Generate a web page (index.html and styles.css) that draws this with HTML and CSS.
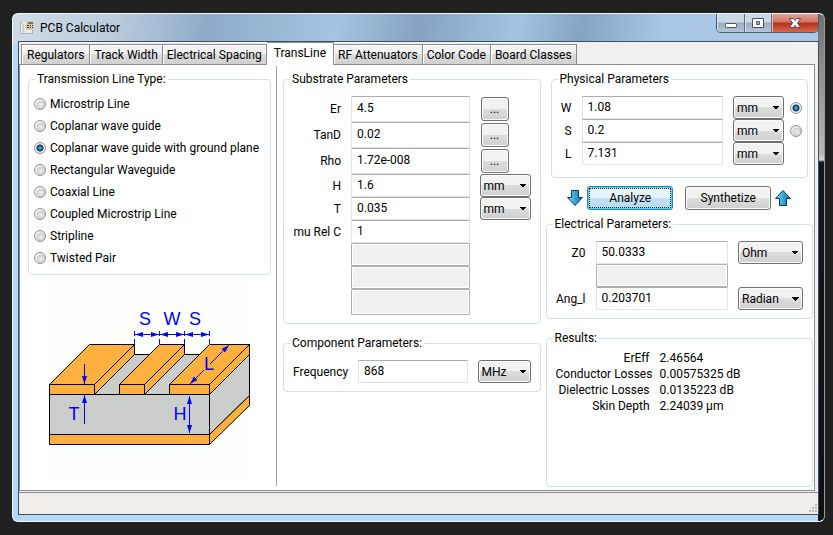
FILE: index.html
```
<!DOCTYPE html>
<html lang="en">
<head>
<meta charset="utf-8">
<title>PCB Calculator</title>
<link rel="stylesheet" href="styles.css">
</head>
<body>
<div class="window">
  <header class="titlebar">
    <svg class="app-icon" width="16" height="16" viewBox="0 0 16 16" aria-hidden="true">
      <path d="M0 2h12v12H0z" fill="#ececea"/>
      <path d="M.5 2v12M1.500 2l2 4-1 4 2 2-2 2M0 13.500h12M12.500 9v5" fill="none" stroke="#b3b6ba"/>
      <path d="M6 1h8v9H6z" fill="#d3cdb4"/>
      <path d="M8 2h5v2H8z" fill="#6d7a3c"/>
      <path d="M7 5h2v1H7zM10 5h1v1h-1zM12 5h1v1h-1zM7 7h2v1H7zM10 7h1v1h-1zM12 7h1v1h-1z" fill="#333"/>
    </svg>
    <h1 class="title">PCB Calculator</h1>
    <div class="controls">
      <button class="control minimize" type="button" aria-label="Minimize">
        <svg width="14" height="12" viewBox="0 0 14 12"><rect x="1.500" y="6.500" width="11" height="4" rx="1" fill="#fff" stroke="#4b5468"/></svg>
      </button>
      <button class="control maximize" type="button" aria-label="Maximize">
        <svg width="12" height="12" viewBox="0 0 12 12"><path fill-rule="evenodd" d="M.5 1.500h11v9H.5zM4.500 4.500v3h3v-3z" fill="#fff" stroke="#4b5468"/></svg>
      </button>
      <button class="control close" type="button" aria-label="Close">
        <svg width="14" height="12" viewBox="0 0 14 12"><path d="M1.500 1.500h4L7 3.500l1.500-2h4L9.500 6l3 4.500h-4L7 8.500l-1.500 2h-4l3-4.500z" fill="#fff" stroke="#4f4a5c"/></svg>
      </button>
    </div>
  </header>
  <div class="client">
    <nav class="tabs">
      <button class="tab" type="button">Regulators</button>
      <button class="tab" type="button">Track Width</button>
      <button class="tab" type="button">Electrical Spacing</button>
      <button class="tab active" type="button">TransLine</button>
      <button class="tab" type="button">RF Attenuators</button>
      <button class="tab" type="button">Color Code</button>
      <button class="tab" type="button">Board Classes</button>
    </nav>
    <main class="page">
      <section class="types-column">
        <fieldset class="group types">
          <legend>Transmission Line Type:</legend>
          <label class="choice"><input type="radio" name="type">Microstrip Line</label>
          <label class="choice"><input type="radio" name="type">Coplanar wave guide</label>
          <label class="choice"><input type="radio" name="type" checked>Coplanar wave guide with ground plane</label>
          <label class="choice"><input type="radio" name="type">Rectangular Waveguide</label>
          <label class="choice"><input type="radio" name="type">Coaxial Line</label>
          <label class="choice"><input type="radio" name="type">Coupled Microstrip Line</label>
          <label class="choice"><input type="radio" name="type">Stripline</label>
          <label class="choice"><input type="radio" name="type">Twisted Pair</label>
        </fieldset>
        <svg class="diagram" width="202" height="203" viewBox="48 280 202 203" role="img" aria-label="Coplanar wave guide with ground plane">
          <defs>
            <marker id="tip" viewBox="0 0 8 6" refX="8" refY="3" markerWidth="8" markerHeight="6" markerUnits="userSpaceOnUse" orient="auto-start-reverse"><path d="M0 .5L8 3 0 5.500z" fill="#0000f5"/></marker>
          </defs>
          <path d="M48 280h202v203H48z" fill="#fcfffc"/>
          <g stroke="#000" stroke-linejoin="round">
            <path d="M94.500 394.500l40-40h114.500l-39.500 40z" fill="#cbcdcb"/>
            <path d="M49.500 394.500h160v40h-160z" fill="#cbcdcb"/>
            <path d="M209.500 394.500l40-40v41l-40 39z" fill="#cbcdcb"/>
            <path d="M49.500 434.500h160v10h-160zM209.500 434.500l40-39v10l-40 39z" fill="#ffb03f"/>
            <path d="M49.500 384.500l40-40h45l-40 40zM94.500 384.500l40-40v10l-40 40zM49.500 384.500h45v10h-45z" fill="#ffb03f"/>
            <path d="M119.500 384.500l40-40h25l-40 40zM144.500 384.500l40-40v10l-40 40zM119.500 384.500h25v10h-25z" fill="#ffb03f"/>
            <path d="M169.500 384.500l40-40h40l-40 40zM209.500 384.500l40-40v10l-40 40zM169.500 384.500h40v10h-40z" fill="#ffb03f"/>
          </g>
          <g fill="none" stroke="#0000f5">
            <path d="M134.500 331v13M159.500 331v13M184.500 331v13M209.500 331v13" stroke-dasharray="5 3"/>
            <path d="M135 334.500h24" marker-start="url(#tip)" marker-end="url(#tip)"/>
            <path d="M160 334.500h24" marker-start="url(#tip)" marker-end="url(#tip)"/>
            <path d="M185 334.500h24" marker-start="url(#tip)" marker-end="url(#tip)"/>
            <path d="M189.500 396v37" marker-start="url(#tip)" marker-end="url(#tip)"/>
            <path d="M84.500 364v20" marker-end="url(#tip)"/>
            <path d="M84.500 424v-29" marker-end="url(#tip)"/>
            <path d="M204 370l-14 14" marker-end="url(#tip)"/>
            <path d="M210 364l19-19" marker-end="url(#tip)"/>
          </g>
          <g class="diagram-text">
            <text x="145" y="325">S</text><text x="172" y="325">W</text><text x="195" y="325">S</text>
            <text x="209" y="370">L</text><text x="74" y="420">T</text><text x="180" y="420">H</text>
          </g>
        </svg>
      </section>
      <section class="middle-column">
        <fieldset class="group substrate">
          <legend>Substrate Parameters</legend>
          <div class="row tall"><label for="er">Er</label><input id="er" type="text" value="4.5"><button class="button more" type="button" aria-label="Er values">...</button></div>
          <div class="row tall"><label for="tand">TanD</label><input id="tand" type="text" value="0.02"><button class="button more" type="button" aria-label="TanD values">...</button></div>
          <div class="row tall"><label for="rho">Rho</label><input id="rho" type="text" value="1.72e-008"><button class="button more" type="button" aria-label="Rho values">...</button></div>
          <div class="row"><label for="h">H</label><input id="h" type="text" value="1.6"><select aria-label="H unit"><option>mm</option></select></div>
          <div class="row"><label for="t">T</label><input id="t" type="text" value="0.035"><select aria-label="T unit"><option>mm</option></select></div>
          <div class="row"><label for="mu">mu Rel C</label><input id="mu" type="text" value="1"></div>
          <div class="row"><input class="unlabelled" type="text" disabled aria-label="Unused 1"></div>
          <div class="row"><input class="unlabelled" type="text" disabled aria-label="Unused 2"></div>
          <div class="row tall"><input class="unlabelled" type="text" disabled aria-label="Unused 3"></div>
        </fieldset>
        <fieldset class="group component">
          <legend>Component Parameters:</legend>
          <div class="row"><label for="freq">Frequency</label><input id="freq" type="text" value="868"><select aria-label="Frequency unit"><option>MHz</option></select></div>
        </fieldset>
      </section>
      <section class="right-column">
        <fieldset class="group physical">
          <legend>Physical Parameters</legend>
          <div class="row"><label for="w">W</label><input id="w" type="text" value="1.08"><select aria-label="W unit"><option>mm</option></select><input type="radio" name="solve" aria-label="Solve for W" checked></div>
          <div class="row"><label for="s">S</label><input id="s" type="text" value="0.2"><select aria-label="S unit"><option>mm</option></select><input type="radio" name="solve" aria-label="Solve for S"></div>
          <div class="row"><label for="l">L</label><input id="l" type="text" value="7.131"><select aria-label="L unit"><option>mm</option></select></div>
        </fieldset>
        <div class="actions">
          <svg width="18" height="18" viewBox="0 0 18 18" aria-hidden="true">
            <defs><linearGradient id="shine"><stop offset="0" stop-color="#8fe0f5"/><stop offset=".5" stop-color="#2fa9d6"/><stop offset="1" stop-color="#156d9b"/></linearGradient></defs>
            <path d="M5.500 1.500h7v7h4L9 16.500 1.500 8.500h4z" fill="url(#shine)" stroke="#12344f"/>
          </svg>
          <button class="button focused" type="button">Analyze</button>
          <button class="button" type="button">Synthetize</button>
          <svg width="18" height="18" viewBox="0 0 18 18" aria-hidden="true"><path d="M5.500 16.500h7v-7h4L9 1.500 1.500 9.500h4z" fill="url(#shine)" stroke="#12344f"/></svg>
        </div>
        <fieldset class="group electrical">
          <legend>Electrical Parameters:</legend>
          <div class="row"><label for="z0">Z0</label><input id="z0" type="text" value="50.0333"><select aria-label="Z0 unit"><option>Ohm</option></select></div>
          <div class="row"><input class="unlabelled" type="text" disabled aria-label="Unused 4"></div>
          <div class="row"><label for="ang">Ang_l</label><input id="ang" type="text" value="0.203701"><select aria-label="Ang_l unit"><option>Radian</option></select></div>
        </fieldset>
        <fieldset class="group results">
          <legend>Results:</legend>
          <dl class="result-list">
            <dt>ErEff</dt><dd>2.46564</dd>
            <dt>Conductor Losses</dt><dd>0.00575325 dB</dd>
            <dt>Dielectric Losses</dt><dd>0.0135223 dB</dd>
            <dt>Skin Depth</dt><dd>2.24039 µm</dd>
          </dl>
        </fieldset>
      </section>
    </main>
    <footer class="statusbar">
      <svg width="10" height="10" viewBox="0 0 10 10" aria-hidden="true"><path d="M7 0h2v2H7zM4 3h2v2H4zM7 3h2v2H7zM1 6h2v2H1zM4 6h2v2H4zM7 6h2v2H7z" fill="#bdbab9"/></svg>
    </footer>
  </div>
</div>
</body>
</html>
```
FILE: styles.css
```
* { box-sizing: border-box; }

body {
  margin: 0;
  min-height: 100vh;
  display: flex;
  padding: 13px 8px 13px 12px;
  background: #212121;
  color: #000;
  font: 12px/16px Roboto, "Open Sans", sans-serif;
}

button, input, select { font: inherit; color: inherit; margin: 0; }

.window {
  flex: 1;
  display: flex;
  flex-direction: column;
  padding: 0 5px;
  border: 1px solid #f2f8fd;
  border-right-color: #9a9a9a;
  border-radius: 6px;
  background:
    linear-gradient(to bottom, #6f7173 0, #b8b8b8 140px, #d8d8d8 146px, #11181d 148px, #0d1114 100%) right / 6px 100% no-repeat,
    linear-gradient(100deg, #cfdbe7 0, #bccddd 12%, #8fabc9 24%, #a5c3e0 40%, #86a2c0 50%, #a3c3e2 62%, #86a3c1 70%, #a9c7e5 80%, #aac8e6 100%) top / 100% 30px no-repeat,
    #b4d8fa;
}

.titlebar {
  height: 27px;
  display: flex;
  align-items: center;
}

.app-icon { margin-left: 2px; }

.title {
  margin: 0 0 0 4px;
  flex: 1;
  font-size: 12px;
  font-weight: 400;
}

.controls {
  align-self: flex-start;
  display: flex;
  height: 19px;
  border: 1px solid #4c5a6d;
  border-top: 0;
  border-radius: 0 0 5px 5px;
  overflow: hidden;
}

.control {
  display: flex;
  align-items: center;
  justify-content: center;
  width: 28px;
  padding: 0;
  border: 0;
  border-right: 1px solid #5d6c80;
  background: linear-gradient(#cbd8e6 45%, #98abc0 50%, #b4c7da);
  box-shadow: inset 1px 0 #d9e4ef;
}

.maximize { width: 27px; }

.close {
  width: 46px;
  border-right: 0;
  background: linear-gradient(#e0a396, #cf7563 45%, #b5301a 50%, #d6684a);
  box-shadow: inset 1px 0 #e9b8ad;
}

.client {
  flex: 1;
  display: flex;
  flex-direction: column;
  margin-bottom: 6px;
  border: 1px solid #454f5c;
  background: #f0f0f0;
}

.tabs {
  display: flex;
  align-items: flex-end;
  height: 22px;
  padding-left: 2px;
}

.tab {
  height: 20px;
  padding: 0 4px;
  border: 1px solid #898c95;
  border-bottom: 0;
  border-left-width: 0;
  background: linear-gradient(#f2f2f2 50%, #dddddd 50%, #d0d0d0);
  box-shadow: inset 1px 1px #fcfcfc;
  line-height: 18px;
  white-space: nowrap;
}

.tab:first-child {
  padding: 0 5px;
  border-left-width: 1px;
}

.tab.active {
  position: relative;
  height: 23px;
  margin-bottom: -1px;
  padding: 0 7px 2px;
  background: #fff;
}

.page {
  flex: 1;
  display: flex;
  margin-right: 3px;
  border: 1px solid #898c95;
  background: #fff;
}

.types-column {
  width: 257px;
  flex: none;
  display: flex;
  flex-direction: column;
  align-items: center;
  padding: 5px 5px 0 8px;
  margin: 1px 0 4px;
  border-right: 1px solid #a0a0a0;
}

.group {
  min-width: 0;
  margin: 0;
  padding: 9px 5px;
  border: 1px solid #d5dfe5;
  border-radius: 4px;
}

.group legend {
  margin-left: 1px;
  padding: 0 2px;
}

.types {
  width: 100%;
  padding-top: 6px;
  padding-bottom: 5px;
}

.choice {
  display: flex;
  align-items: center;
  gap: 4px;
  height: 22px;
  white-space: nowrap;
}

input[type="radio"] {
  appearance: none;
  flex: none;
  width: 12px;
  height: 12px;
  border: 1px solid #8e8f8f;
  border-radius: 50%;
  background: radial-gradient(circle at 60% 60%, #eee 0, #cfcfcf 4px, #f4f4f4 5px);
}

input[type="radio"]:checked {
  background: radial-gradient(circle at 50% 50%, #59c4ee 0, #1a6a9c 2px, #0c2c4a 3px, #f4f4f4 4px);
}

.diagram {
  margin-top: 5px;
  margin-right: 2px;
}

.diagram-text {
  fill: #0000f5;
  font: 18px "Liberation Sans", Arial, sans-serif;
  text-anchor: middle;
}

.middle-column {
  flex: 258;
  min-width: 0;
  display: flex;
  flex-direction: column;
  padding: 6px 0 0 6px;
}

.row {
  display: grid;
  column-gap: 10px;
  height: 23px;
  padding: 0 4px;
}

.row.tall { height: 26px; }

.row label {
  align-self: center;
  text-align: right;
  white-space: nowrap;
}

.unlabelled { grid-column: 2; }

input[type="text"] {
  width: 100%;
  min-width: 0;
  padding: 0 5px 2px;
  border: 1px solid #e2e3ea;
  border-top-color: #abadb3;
  border-radius: 1px;
  background: #fff;
}

input[type="text"]:disabled {
  border-color: #afafaf;
  background: #f0f0f0;
  box-shadow: inset 0 0 0 1px #fff;
}

.button, select {
  border: 1px solid #707070;
  border-radius: 3px;
  background-color: #dadada;
  background-image: linear-gradient(#f2f2f2 50%, #dddddd 50%, #cfcfcf);
  box-shadow: inset 0 0 0 1px #fcfcfc;
}

.button { padding: 0; }

select {
  appearance: none;
  width: 100%;
  padding: 0 3px;
  background-image:
    linear-gradient(45deg, transparent 50%, #000 50%),
    linear-gradient(-45deg, transparent 50%, #000 50%),
    linear-gradient(#f2f2f2 50%, #dddddd 50%, #cfcfcf);
  background-position: right 7px top 9px, right 3px top 9px, 0 0;
  background-size: 4px 4px, 4px 4px, 100% 100%;
  background-repeat: no-repeat;
}

.substrate { padding-bottom: 8px; }

.substrate .row { grid-template-columns: 48px 1fr 51px; }

.more {
  width: 28px;
  height: 24px;
  margin: 1px 0 0 1px;
}

.component {
  margin-top: 11px;
  padding-bottom: 8px;
}

.component .row { grid-template-columns: 55px 1fr 53px; }

.right-column {
  flex: 268;
  min-width: 0;
  display: flex;
  flex-direction: column;
  padding: 6px 1px 3px 5px;
}

.physical {
  margin: 0 5px;
  padding-bottom: 12px;
}

.physical .row {
  grid-template-columns: 12px 1fr 51px 8px;
  padding: 0 0 0 3px;
}

.physical input[type="radio"] {
  align-self: center;
  justify-self: end;
}

.actions {
  display: flex;
  align-items: center;
  justify-content: center;
  gap: 3px;
  height: 24px;
  margin: 8px 0 6px;
}

.actions .button {
  width: 86px;
  height: 24px;
}

.actions .button + .button { margin-left: 9px; }

.actions .focused {
  border-color: #2f7fa8;
  background-image: linear-gradient(#e6f5fd 50%, #c3e3f4 50%, #b4d9ee);
  box-shadow: inset 0 0 0 1px #46d8fb;
  outline: 1px dotted #222;
  outline-offset: -3px;
}

.electrical { padding-bottom: 8px; }

.electrical .row { grid-template-columns: 30px 1fr 65px; }

.results {
  flex: 1;
  margin-top: 11px;
  padding-top: 4px;
}

.result-list {
  display: grid;
  grid-template-columns: 94px 1fr;
  column-gap: 10px;
  margin: 0;
  padding: 0 4px;
}

.result-list dt { text-align: right; white-space: nowrap; }
.result-list dd { margin: 0; }

.statusbar {
  display: flex;
  align-items: flex-end;
  justify-content: flex-end;
  height: 22px;
  margin-top: 1px;
  border-top: 1px solid #898c95;
  background: #f1edeb;
}
```
